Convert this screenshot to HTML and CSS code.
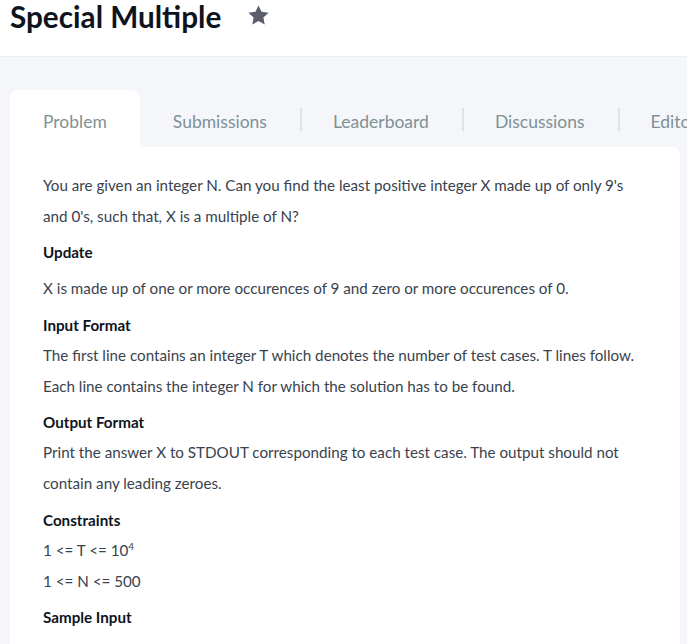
FILE: index.html
```html
<!DOCTYPE html>
<html>
<head>
<meta charset="utf-8">
<link rel="stylesheet" href="styles.css">
</head>
<body>
<header class="page-header">
  <h1 class="title">Special Multiple</h1>
  <svg class="star" viewBox="0 0 24 24" width="23" height="23"><path d="M12 1.5l3.2 6.7 7.3.9-5.4 5 1.4 7.3L12 17.8l-6.5 3.6 1.4-7.3-5.4-5 7.3-.9z" fill="#5b5d6b"/></svg>
</header>
<main class="main">
  <nav class="tabs">
    <div class="tab active">Problem</div>
    <div class="tab">Submissions</div>
    <div class="tab sep">Leaderboard</div>
    <div class="tab sep">Discussions</div>
    <div class="tab sep">Editorial</div>
  </nav>
  <section class="card">
    <p>You are given an integer N. Can you find the least positive integer X made up of only 9's and 0's, such that, X is a multiple of N?</p>
    <h2>Update</h2>
    <p class="update">X is made up of one or more occurences of 9 and zero or more occurences of 0.</p>
    <h2>Input Format</h2>
    <p>The first line contains an integer T which denotes the number of test cases. T lines follow.<br>Each line contains the integer N for which the solution has to be found.</p>
    <h2>Output Format</h2>
    <p>Print the answer X to STDOUT corresponding to each test case. The output should not contain any leading zeroes.</p>
    <h2>Constraints</h2>
    <p>1 &lt;= T &lt;= 10<sup>4</sup><br>1 &lt;= N &lt;= 500</p>
    <h2>Sample Input</h2>
  </section>
</main>
</body>
</html>
```
FILE: styles.css
```css
html, body {
  margin: 0;
  padding: 0;
  background: #f5f6fa;
  font-family: Lato, "Open Sans", sans-serif;
  overflow: hidden;
}
.page-header {
  background: #fff;
  height: 57px;
  border-bottom: 1px solid #eceef3;
  display: flex;
  align-items: flex-start;
  padding-left: 10px;
  box-sizing: border-box;
}
.title {
  margin: 0;
  font-size: 29.7px;
  line-height: 34px;
  font-weight: 700;
  color: #0e141e;
}
.star {
  margin-left: 26px;
  margin-top: 4px;
}
.main {
  padding: 33px 7px 0 10px;
}
.tabs {
  display: flex;
  height: 57px;
  white-space: nowrap;
}
.tab {
  padding: 5px 33px 0;
  display: flex;
  align-items: center;
  font-size: 17.5px;
  color: #7f9195;
  position: relative;
  flex-shrink: 0;
}
.tab.active {
  background: #fff;
  border-radius: 8px 8px 0 0;
}
.tab.sep::before {
  content: "";
  position: absolute;
  left: 0;
  top: 18px;
  height: 23px;
  width: 2px;
  background: #dde2e5;
}
.card {
  background: #fff;
  border-radius: 0 8px 0 0;
  padding: 23px 39px 20px 33px;
  color: #39424e;
  font-size: 15.2px;
}
.card p {
  margin: 0;
  line-height: 31px;
}
.card p.update {
  margin-top: 6px;
}
.card h2 {
  margin: 5.4px 0 0;
  font-size: 15.2px;
  line-height: 30px;
  font-weight: 700;
  color: #0e141e;
}
.card sup {
  font-size: 10px;
  line-height: 0;
}
```
